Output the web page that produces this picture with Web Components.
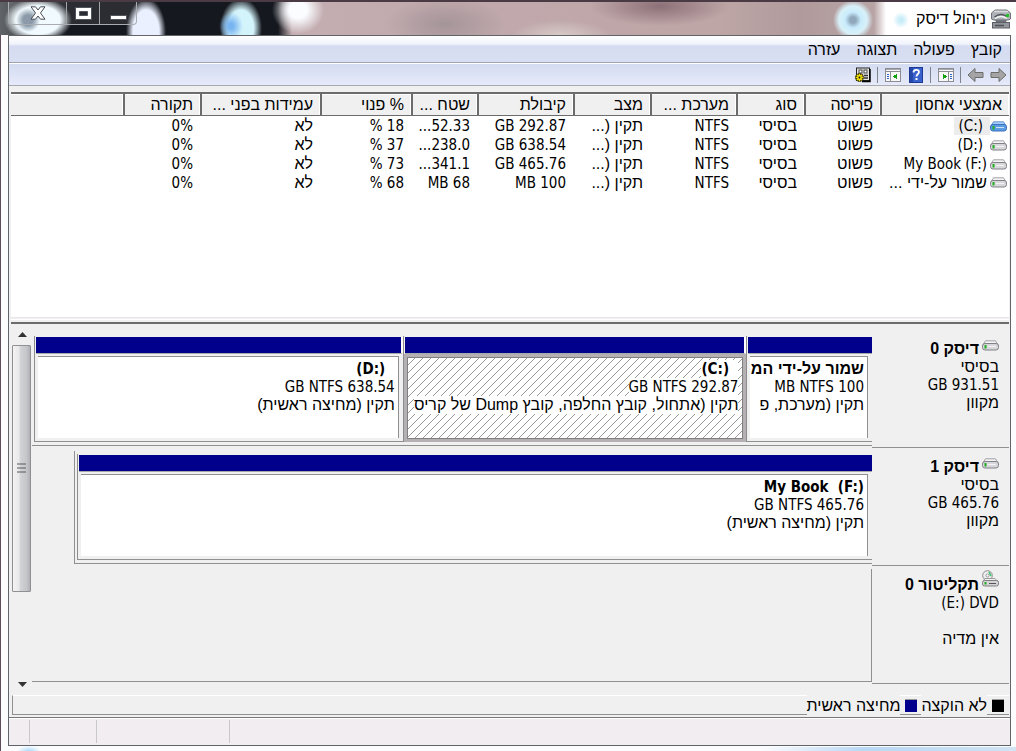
<!DOCTYPE html>
<html lang="he" dir="rtl">
<head>
<meta charset="utf-8">
<title>ניהול דיסק</title>
<style>
  body { margin: 0; font: 16px/18px "Liberation Sans", Arial, sans-serif; color: #000; background: #fff; }
</style>
</head>
<body>
<dm-window></dm-window>
<script>
const define = (name, html, setup) => customElements.define(name, class extends HTMLElement {
  connectedCallback() {
    if (this.shadowRoot) return;
    const root = this.attachShadow({ mode: "open" });
    root.innerHTML = typeof html === "function" ? html(this) : html;
    if (setup) setup(root, this);
  }
});

const drive = (top, body, edge) => `<svg width="17" height="11" viewBox="0 0 17 11">
  <path d="M3.500 .8h10l2.500 4h-15z" fill="${top}" stroke="${edge}" stroke-width=".7"/>
  <rect x=".5" y="3.500" width="16" height="6.500" rx="2.500" fill="${body}" stroke="${edge}"/>
  <rect x="2.500" y="5" width="2" height="3.500" fill="#1fae1f"/><path d="M6 6.500h8" stroke="#fff" opacity=".7"/></svg>`;
const panel = (arrow) => `<svg width="16" height="14" viewBox="0 0 16 14" shape-rendering="crispEdges">
  <rect x=".5" y=".5" width="15" height="13" fill="#f8f8f8" stroke="#8c8c94"/>
  <path d="M1 1.500h14" stroke="#a8a8b0"/><path d="M1 3.500h14" stroke="#8c8c94"/>${arrow}</svg>`;
const arrowPath = "M1 5.500h8V1.500L16 8l-7 6.500v-4H1z";
const icons = {
  drive: drive("#f4f4f4", "#d8d8dc", "#808088"),
  "drive-blue": drive("#a8d0f8", "#5c9ce0", "#3a70c0"),
  forward: `<svg width="17" height="16" viewBox="0 0 17 16"><path d="${arrowPath}" fill="#a4a4a4" stroke="#6c6c6c"/></svg>`,
  back: `<svg width="17" height="16" viewBox="0 0 17 16"><path d="${arrowPath}" transform="matrix(-1 0 0 1 17 0)" fill="#a4a4a4" stroke="#6c6c6c"/></svg>`,
  tree: panel(`<path d="M10.500 4v9" stroke="#8c8c94"/><path d="M12 6.500h2M12 8.500h2M12 10.500h2" stroke="#3060c0"/><path d="M5 5.500v6l4-3z" fill="#18a018"/>`),
  pane: panel(`<path d="M5.500 4v9" stroke="#8c8c94"/><path d="M2 6.500h2M2 8.500h2M2 10.500h2" stroke="#3060c0"/><path d="M12 5.500v6l-4-3z" fill="#18a018"/>`),
  help: `<svg width="14" height="16" viewBox="0 0 14 16"><rect x=".5" y=".5" width="13" height="15" fill="#3a62cc" stroke="#1c3a94"/><path d="M1 1h3v14H1z" fill="#2648a8"/><path d="M4.500 5.500c0-3.500 5.500-3.500 5.500-.500 0 2-2.500 2-2.500 4.500" fill="none" stroke="#fff" stroke-width="1.800"/><rect x="6.500" y="11" width="2" height="2" fill="#fff"/></svg>`,
  settings: `<svg width="17" height="16" viewBox="0 0 17 16"><rect x="2.500" y="1" width="13" height="12.500" fill="#e4e4e4" stroke="#222"/><path d="M16 2v12.500H8" stroke="#000" stroke-width="1.500" fill="none"/><rect x="5" y="3" width="3" height="3" fill="#fff" stroke="#444"/><rect x="10" y="3" width="3" height="3" fill="#fff" stroke="#444"/><path d="M10 8.500h4M10 11h4" stroke="#333" stroke-width="1.500"/>
    <path d="M5.500 6v9M1 10.500h9M2.300 7.300l6.400 6.400M8.700 7.300l-6.400 6.400" stroke="#111" stroke-width="2.600"/><path d="M5.500 6.500v8M1.500 10.500h8M2.800 7.800l5.400 5.400M8.200 7.800l-5.400 5.400" stroke="#f4e400" stroke-width="1.600"/><circle cx="5.500" cy="10.500" r="1" fill="#111"/></svg>`,
  optical: `<svg width="17" height="17" viewBox="0 0 17 17"><circle cx="5.500" cy="5.500" r="4.800" fill="#eee" stroke="#8c8c8c"/><circle cx="5.500" cy="5.500" r="1.500" fill="#fff" stroke="#999"/><path d="M7 2l2 4" stroke="#38c068" stroke-width="1.500"/><path d="M3 8.500h10l3 3H1z" fill="#f0f0f0" stroke="#888" stroke-width=".8"/><rect x=".5" y="10.500" width="16" height="5.500" rx="2" fill="#d4d4d8" stroke="#808080"/><rect x="2.500" y="12" width="2" height="2.500" fill="#1fae1f"/><path d="M7 13.500h7" stroke="#555"/></svg>`,
  app: `<svg width="20" height="20" viewBox="0 0 20 20"><path d="M4 1h12l3.500 3v6l-2 1H2.500l-2-1V4z" fill="#aeb2b6" stroke="#707478"/><path d="M3 2.500h14" stroke="#d8dadc" stroke-width="1.500"/><path d="M3.500 8q6.500-5 13 0" fill="none" stroke="#50545a" stroke-width="1.500"/><path d="M4 9.500q6-4 12 0" fill="none" stroke="#f4f4f4" stroke-width="1.500"/><rect x="15" y="5" width="3" height="3" fill="#28c028"/><path d="M4 11h12l-1.500 3h-9z" fill="#70747a"/><rect x="1.500" y="13.500" width="17" height="5.500" fill="#92969c" stroke="#5c6066"/><path d="M4 16.500h9" stroke="#4c5054" stroke-width="1.500"/></svg>`,
  close: `<svg width="16" height="14" viewBox="0 0 16 14"><path d="M1 .800h4.500L8 4 10.500.800H15L10.500 7 15 13.200h-4.500L8 10l-2.500 3.200H1L5.500 7z" fill="#fff" stroke="#484c54"/></svg>`,
  maximize: `<svg width="17" height="13" viewBox="0 0 17 13"><path d="M.500.500h16v12H.500zM4.500 4.500v4h8v-4z" fill="#fff" fill-rule="evenodd" stroke="#50545c"/></svg>`,
  minimize: `<svg width="17" height="5" viewBox="0 0 17 5"><rect x=".5" y=".5" width="16" height="4" fill="#fff" stroke="#50545c"/></svg>`
};
define("dm-icon", el => `<style>:host{display:inline-flex;flex:none} svg{display:block}</style>${icons[el.getAttribute("name")]}`);

define("dm-title-bar", `<style>
  :host { display:flex; height:35px; box-sizing:border-box; align-items:flex-start; justify-content:space-between; padding:0 5px 0 8px; border-top:2px solid #4a3a44;
    background:
      radial-gradient(circle at 28px 18px, #8090a0 0 5px, transparent 12px),
      radial-gradient(ellipse 34px 22px at 38px 18px, #f0faff 0 65%, transparent 100%),
      radial-gradient(ellipse 20px 34px at 146px 30px, #eaf0ff 0 65%, transparent 100%),
      radial-gradient(ellipse 12px 14px at 231px 24px, #78b4f0 0 20%, transparent 100%),
      radial-gradient(ellipse 21px 30px at 241px 26px, #d4f4fc 0 60%, transparent 100%),
      radial-gradient(circle at calc(100% - 163px) 18px, #90a8bc 0 3px, #c8ecfc 8px, #d8f0f8 14px, transparent 20px),
      radial-gradient(ellipse 26px 24px at 298px 8px, #fafcff 0 35%, transparent 100%),
      radial-gradient(circle at calc(100% - 115px) 18px, #c8ecf8 0 2px, transparent 8px),
      linear-gradient(to left, #fff 0 130px, transparent 142px),
      radial-gradient(ellipse 60px 26px at 445px 22px, #a49498 0, transparent 100%),
      radial-gradient(ellipse 70px 20px at 660px 4px, #8c7078 0, transparent 100%),
      radial-gradient(ellipse 50px 16px at 560px 34px, #d8ccc8 0, transparent 100%),
      linear-gradient(to right, #606468 0, #15181e 70px 278px, #c4aeb2 292px, #c0a8ac 500px, #bea6a6 720px, #b09a9c 800px, #c8b8b8 100%); }
  h1 { margin:0; display:flex; align-items:center; gap:5px; height:33px; font-weight:400; font-size:inherit; }
  .controls { display:flex; direction:ltr; border:1px solid #a8acb0; border-top:0; border-radius:0 0 4px 4px; }
  button { width:33px; height:22px; padding:0; border:0; border-right:1px solid #a0a4a8; background:#ffffff18; display:grid; place-items:center; }
  button:first-of-type { width:58px } button:last-child { width:36px; border:0; padding:8px 0 0 }
</style>
<h1><dm-icon name="app"></dm-icon>ניהול דיסק</h1>
<div class="controls"><button aria-label="סגור"><dm-icon name="close"></dm-icon></button><button aria-label="הגדל"><dm-icon name="maximize"></dm-icon></button><button aria-label="מזער"><dm-icon name="minimize"></dm-icon></button></div>`);

define("dm-menu-bar", `<style>
  :host { display:block; background:linear-gradient(#fff 0,#f0f3fc 8px,#d5dcf1 10px,#d8dff2); border-bottom:1px solid #a0a4ac; box-shadow:0 1px #fff; margin-bottom:1px }
  nav { display:flex; gap:16px; padding:2px 8px 0; height:24px; align-items:center }
  button { font:inherit; color:inherit; background:none; border:0; padding:0 }
</style><nav><button>קובץ</button><button>פעולה</button><button>תצוגה</button><button>עזרה</button></nav>`);

define("dm-toolbar", `<style>
  :host { display:flex; align-items:center; height:21px; background:linear-gradient(#d4dcf1,#e6eafa); border-bottom:1px solid #a8aab0 }
  button { border:0; padding:0; background:none; width:23px; height:20px; display:grid; place-items:center }
  i { width:1px; height:16px; background:#80848c; margin:0 3px }
</style>
<button aria-label="קדימה"><dm-icon name="forward"></dm-icon></button><button aria-label="אחורה"><dm-icon name="back"></dm-icon></button><i></i>
<button aria-label="עץ המסוף"><dm-icon name="tree"></dm-icon></button><i></i>
<button aria-label="עזרה"><dm-icon name="help"></dm-icon></button><button aria-label="חלונית פעולות"><dm-icon name="pane"></dm-icon></button><i></i>
<button aria-label="הגדרות"><dm-icon name="settings"></dm-icon></button>`);

const ltr = t => `<bdi dir="ltr">${t}</bdi>`;
const columns = [["אמצעי אחסון",129],["פריסה",76],["סוג",68],["מערכת ...",86],["מצב",77],["קיבולת",96],["שטח ...",66],["% פנוי",91],["עמידות בפני ...",120],["תקורה",77],["",0]];
const volumes = [
  ["drive-blue", `<span class="num sel">${ltr("(C:)")}</span>`, "292.87 GB", "52.33...", "18 %"],
  ["drive", `<span class="num pad">${ltr("(D:)")}</span>`, "638.54 GB", "238.0...", "37 %"],
  ["drive", `<span class="num">${ltr("My Book (F:)")}</span>`, "465.76 GB", "341.1...", "73 %"],
  ["drive", "<span>שמור על-ידי ...</span>", "100 MB", "68 MB", "68 %"]
];
define("dm-volume-table", `<style>
  :host { display:block; background:#fff; border-top:2px solid #6c6c6c; }
  table { width:100%; table-layout:fixed; border-collapse:separate; border-spacing:0 }
  th, td { padding:0 7px; text-align:right; font-weight:400; white-space:nowrap }
  th { height:20px; padding-top:1px; line-height:20px; background:#f0f0f0; border-bottom:1px solid #6c6c6c; border-left:2px solid #6c6c6c; box-shadow:inset -1px 1px #fff }
  th:last-child { border-left:0 }
  td { height:19px; line-height:19px; vertical-align:baseline }
  td:first-child { padding:0 2px }
  .num { font-family:"DejaVu Sans Condensed","DejaVu Sans",sans-serif; font-size:15px; line-height:18px }
  .name { display:flex; align-items:baseline; gap:3px }
  .name dm-icon { align-self:center }
  .sel, .pad { padding:0 4px } .sel { background:#ececec; margin-right:-3px; padding-right:7px }
</style>
<table><colgroup>${columns.map(c => `<col${c[1] ? ` style="width:${c[1]}px"` : ""}>`).join("")}</colgroup>
<thead><tr>${columns.map(c => `<th scope="col">${c[0]}</th>`).join("")}</tr></thead>
<tbody>${volumes.map(v => `<tr><td><div class="name"><dm-icon name="${v[0]}"></dm-icon>${v[1]}</div></td><td>פשוט</td><td>בסיסי</td><td class="num">NTFS</td><td>תקין (...</td><td class="num">${v[2]}</td><td class="num">${v[3]}</td><td class="num">${v[4]}</td><td>לא</td><td class="num">0%</td><td></td></tr>`).join("")}</tbody></table>`);

define("dm-scrollbar", `<style>
  :host { display:flex; flex-direction:column; width:20px; flex:none }
  button { border:0; padding:0; background:none; height:21px; display:grid; place-items:center; flex:none }
  .track { flex:1; }
  .thumb { box-sizing:border-box; height:75%; margin:0 1px 0 0; border:1px solid #909094; border-radius:1px; background:linear-gradient(to right,#f4f4f4 0,#e8e8ea 35%,#d0d2d6 45%,#c4c6ca 80%,#b0b0b6); display:grid; place-items:center }
  svg { display:block }
</style>
<button aria-label="גלול מעלה"><svg width="9" height="5"><path d="M0 5l4.500-5L9 5z" fill="#333"/></svg></button>
<div class="track"><div class="thumb"><svg width="9" height="10"><path d="M0 1h9M0 5h9M0 9h9" stroke="#58585c"/></svg></div></div>
<button aria-label="גלול מטה"><svg width="9" height="5"><path d="M0 0h9L4.500 5z" fill="#333"/></svg></button>`);

define("dm-disk", el => `<style>
  :host { display:flex; height:118px }
  .label { box-sizing:border-box; width:137px; flex:none; padding:10px 10px 0 0; border-bottom:1px solid #909090 }
  .head { display:flex; gap:3px; font-weight:700 } .head dm-icon { margin-top:${el.getAttribute("icon") === "optical" ? "-6px" : "0"}; align-self:flex-start; height:11px }
  .area { box-sizing:border-box; flex:1; min-width:0; margin-bottom:2px; padding:6px 0 3px; border-bottom:1px solid #909090 }
  .vols { display:flex; height:100%; padding-left:2px; box-sizing:border-box }
  :host([short]) .area { flex:0 0 auto; width:calc((100% - 137px) * .95); border-left:1px solid #909090; margin-top:3px; padding-top:3px }
  :host([empty]) .area { border-right:1px solid #909090; margin-top:3px }
</style>
<div class="label"><div class="head"><dm-icon name="${el.getAttribute("icon")}"></dm-icon><slot name="name"></slot></div><slot name="info"></slot></div>
<div class="area"><div class="vols"><slot></slot></div></div>`);

define("dm-volume", el => `<style>
  :host { display:flex; flex-direction:column; flex:${el.getAttribute("size")} 1 0px; min-width:0; box-sizing:border-box; border-left:1px solid #8c8c8c; border-bottom:1px solid #909090; }
  .bar { height:16px; flex:none; margin:1px 0 0 1px; background:#00008c; border-bottom:1px solid #a8a8a8; }
  :host(:not(:first-of-type)) .bar { border-right:2px solid #fff }
  .body { flex:1; min-height:0; margin:2px 4px 3px 3px; background:#fff; border-top:1px solid #909090; border-right:1px solid #909090; white-space:pre; padding:3px 3px 0 4px }
  ::slotted(div) { width:fit-content; background:#fff }
  ::slotted(div:first-child) { font-weight:700 }
  :host([selected]) { border-bottom:0 }
  :host([selected]) .body { margin:0; border:4px solid #b4b0b4; border-top-width:3px; outline:1px solid #808080; outline-offset:-4px; padding:3px 4px 0 3px;
    background:url("data:image/svg+xml,%3Csvg xmlns='http://www.w3.org/2000/svg' width='8' height='8'%3E%3Cpath d='M-1 9L9-1M-1 1L1-1M7 9L9 7' stroke='%23808080' stroke-width='.8'/%3E%3C/svg%3E") #fff }
</style><div class="bar"></div><div class="body"><slot></slot></div>`);

define("dm-legend", `<style>
  :host { display:flex; align-items:center; height:20px; padding:0 5px 0 0; margin:0 1px 0 3px; border:1px solid #909090; border-top-color:#fff; border-right:0; gap:4px; box-sizing:border-box }
  span { display:flex; align-items:center; gap:5px }
  b { width:12px; height:13px; background:#000; box-sizing:border-box; border-top:1px solid #999 } .primary b { background:#00008c }
  em { font-style:normal; background:#f0f0f0; padding-top:2px; line-height:18px }
</style><span><b></b><em>לא הוקצה</em></span><span class="primary"><b></b><em>מחיצה ראשית</em></span>`);

define("dm-status-bar", `<style>
  :host { display:flex; direction:ltr; height:25px; padding:1px 0; margin-top:2px; border-top:1px solid #787878; background:#f1edf0; box-shadow:inset 0 1px #fff }
  i { box-sizing:border-box; border-right:1px solid #c8c8c8; margin:1px 0; width:133px } i:first-of-type { width:21px } i:nth-of-type(2) { width:67px }
</style><i></i><i></i><i></i>`);

define("dm-window", `<style>
  :host { display:flex; flex-direction:column; min-height:100vh; box-sizing:border-box; border-left:1px solid #5c4c5c; padding-bottom:5px;
    background:radial-gradient(ellipse 12px 5px at 28px 100%, #a8dcfc, transparent), linear-gradient(to right, transparent 75%, #b8d8f4 85%, #d0e4f4) bottom/100% 4px no-repeat, #fcfcff }
  dm-title-bar { margin-left:-1px }
  main { flex:1; display:flex; flex-direction:column; margin:0 5px 0 7px; border:1px solid #606468; background:#f0f0f0 }
  dm-volume-table { flex:1; margin:6px 1px 0 2px }
  hr { margin:0 1px 0 2px; border:0; height:7px; background:linear-gradient(#eee4ee 0 1px,#f0f0f0 1px 2px,#fff 2px 3px,#f0f0f0 3px 5px,#6c6c6c 5px) }
  .graph { display:flex; flex-direction:row-reverse; padding:0 1px 0 3px }
  .disks { flex:1; min-width:0; padding:6px 0 11px }
  .num { font-family:"DejaVu Sans Condensed","DejaVu Sans",sans-serif; font-size:15px }
</style>
<dm-title-bar></dm-title-bar>
<main>
  <dm-menu-bar></dm-menu-bar>
  <dm-toolbar></dm-toolbar>
  <dm-volume-table></dm-volume-table>
  <hr>
  <div class="graph">
    <dm-scrollbar></dm-scrollbar>
    <div class="disks">
      <dm-disk icon="drive"><span slot="name">דיסק 0</span><div slot="info">בסיסי<div class="num">931.51 GB</div>מקוון</div>
        <dm-volume size="125"><div>שמור על-ידי המ</div><div class="num">100 MB NTFS</div><div>תקין (מערכת, פ</div></dm-volume>
        <dm-volume size="344" selected><div class="num">  ${ltr("(C:)")}</div><div class="num">292.87 GB NTFS</div><div>תקין (אתחול, קובץ החלפה, קובץ Dump של קריס</div></dm-volume>
        <dm-volume size="369"><div class="num">  ${ltr("(D:)")}</div><div class="num">638.54 GB NTFS</div><div>תקין (מחיצה ראשית)</div></dm-volume>
      </dm-disk>
      <dm-disk icon="drive" short><span slot="name">דיסק 1</span><div slot="info">בסיסי<div class="num">465.76 GB</div>מקוון</div>
        <dm-volume size="1"><div class="num">${ltr("My Book  (F:)")}</div><div class="num">465.76 GB NTFS</div><div>תקין (מחיצה ראשית)</div></dm-volume>
      </dm-disk>
      <dm-disk icon="optical" empty><span slot="name">תקליטור 0</span><div slot="info"><div class="num">DVD ${ltr("(E:)")}</div><br>אין מדיה</div></dm-disk>
    </div>
  </div>
  <dm-legend></dm-legend>
  <dm-status-bar></dm-status-bar>
</main>`);
</script>
</body>
</html>
